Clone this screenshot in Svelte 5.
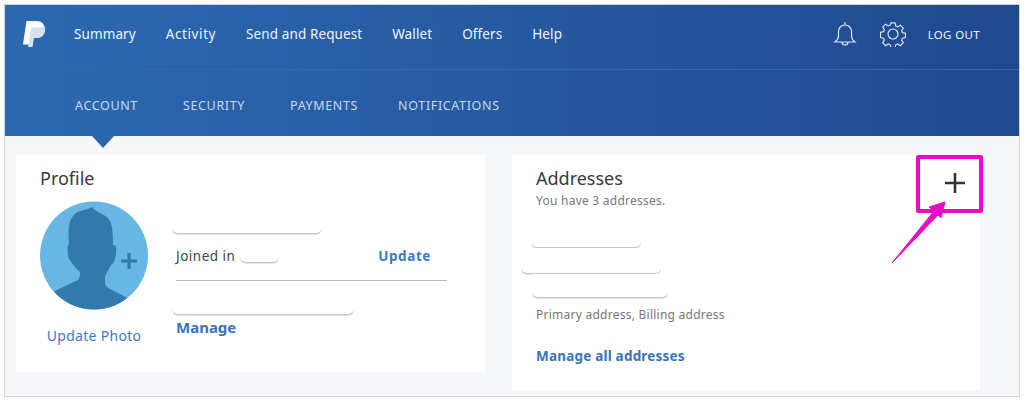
<script lang="ts">
  const mainNav = ['Summary', 'Activity', 'Send and Request', 'Wallet', 'Offers', 'Help'];
  const subNav = ['ACCOUNT', 'SECURITY', 'PAYMENTS', 'NOTIFICATIONS'];
</script>

<div class="page">
  <div class="frame">
    <header class="header">
      <div class="top">
        <svg class="logo" width="23" height="26" viewBox="0 0 23 26">
          <path d="M3.500 0H13C19 0 22 3.500 21 8 20 12 17 14 13 14H8.500L7 23.500H0Z" fill="#fff" />
          <path d="M8 6.500H15C18 6.500 20.500 6 21.300 4.500 23.500 9 21.500 17 14 17H11L9.500 26H5Z" fill="#d5e2f1" />
        </svg>
        <nav class="main-nav">
          {#each mainNav as item}
            <span>{item}</span>
          {/each}
        </nav>
        <div class="tools">
          <svg width="24" height="26" viewBox="0 0 24 26" fill="none" stroke="#dbe4f1" stroke-width="1.200">
            <path d="M12 1v3M12 4c-4 0-6.500 3-6.500 7v4c0 2.500-1.500 4.500-3.500 6h20c-2-1.500-3.500-3.500-3.500-6v-4c0-4-2.500-7-6.500-7Z" />
            <path d="M9 21c0 4 6 4 6 0" />
          </svg>
          <svg class="gear" width="26" height="26" viewBox="0 0 26 26" fill="none" stroke="#dbe4f1" stroke-width="1.200">
            <circle cx="13" cy="13" r="5" />
            <path d="M10.800 1.500h4.400l.7 3.200 2 .9 2.800-1.800 3 3.100-1.700 2.700.8 2 3.200.7v4.400l-3.200.7-.8 2 1.700 2.700-3 3.100-2.800-1.800-2 .9-.7 3.200h-4.400l-.7-3.200-2-.9-2.800 1.800-3-3.100 1.700-2.700-.8-2-3.200-.7V11.300l3.200-.7.800-2-1.700-2.700 3-3.100 2.800 1.800 2-.9Z" transform="translate(.5 .5) scale(.96)" />
          </svg>
          <span class="logout">LOG OUT</span>
        </div>
      </div>
      <nav class="sub-nav">
        {#each subNav as item, i}
          <span class:active={i === 0}>{item}</span>
        {/each}
      </nav>
    </header>

    <main class="content">
      <section class="card profile">
        <h2>Profile</h2>
        <div class="profile-body">
          <div class="photo">
            <svg width="108" height="109" viewBox="0 0 108 109">
              <defs>
                <clipPath id="round"><circle cx="54" cy="54.500" r="54" /></clipPath>
              </defs>
              <circle cx="54" cy="54.500" r="54" fill="#67b6e4" />
              <g clip-path="url(#round)" fill="#3279ae">
                <path d="M52 6C54 10 62 12 68 17 72 22 73 28 73 44L76 45C77 52 75 62 71 64 68 70 66 73 65 75V81C65 85 68 87 72 89L93 100 100 120H0L15 90 38 79C40 77 40 74 40 71 36 68 33 64 30 59 28 58 27 50 28 44L29 43C28 30 28 18 36 12 41 9 48 9 52 6Z" />
              </g>
              <path d="M81 60h16M89 52v16" stroke="#3279ae" stroke-width="3" fill="none" />
            </svg>
            <a href="#photo">Update Photo</a>
          </div>
          <div class="details">
            <div class="blob name"></div>
            <div class="joined">
              <span>Joined in</span>
              <div class="blob year"></div>
              <a href="#update" class="update">Update</a>
            </div>
            <div class="blob email"></div>
            <a href="#manage" class="manage">Manage</a>
          </div>
        </div>
      </section>

      <section class="card addresses">
        <h2>Addresses</h2>
        <p class="count">You have 3 addresses.</p>
        <div class="blob addr1"></div>
        <div class="blob addr2"></div>
        <div class="blob addr3"></div>
        <p class="kind">Primary address, Billing address</p>
        <a href="#all" class="all">Manage all addresses</a>
        <svg class="plus" width="20" height="20" viewBox="0 0 20 20">
          <path d="M0 10h20M10 0v20" stroke="#333" stroke-width="2.600" />
        </svg>
      </section>
    </main>
  </div>

  <div class="highlight"></div>
  <svg class="arrow" width="60" height="68" viewBox="0 0 60 68">
    <path d="M53 2L37 7 42 11 0 63 46 15 49 18Z" fill="#e80cc8" stroke="#e80cc8" stroke-width="1" stroke-linejoin="round" />
  </svg>
</div>

<style>
  :global(body) {
    margin: 0;
    background: #fff;
  }
  .page {
    position: relative;
    width: 1024px;
    height: 401px;
    padding: 4px;
    box-sizing: border-box;
    font-family: "Noto Sans", sans-serif;
    overflow: hidden;
  }
  .frame {
    width: 1016px;
    height: 393px;
    box-sizing: border-box;
    background: #f5f7fb;
    border: 1px solid #d4d4d4;
    overflow: hidden;
  }
  .header {
    height: 131px;
    background: linear-gradient(90deg, #2c69b1, #20498f);
    color: #fff;
  }
  .top {
    display: flex;
    align-items: center;
    height: 58px;
    padding: 0 39px 6px 18px;
    border-bottom: 1px solid #3069b2;
  }
  .main-nav {
    display: flex;
    gap: 30px;
    margin-left: 28px;
    font-size: 13.500px;
    letter-spacing: 0.1px;
    color: #eef3fa;
  }
  .main-nav span:nth-child(2) {
    letter-spacing: 0.6px;
  }
  .tools {
    display: flex;
    align-items: center;
    margin-left: auto;
  }
  .gear {
    margin-left: 23px;
  }
  .logout {
    margin-left: 22px;
    font-size: 11.500px;
    letter-spacing: 0.35px;
    color: #eef3fa;
  }
  .sub-nav {
    display: flex;
    gap: 45px;
    box-sizing: border-box;
    height: 66px;
    align-items: center;
    padding: 4px 0 0 70px;
    font-size: 12.500px;
    letter-spacing: 0.65px;
    color: #c9d8ec;
  }
  .sub-nav span:nth-child(4) {
    margin-left: -5px;
  }
  .sub-nav .active {
    position: relative;
  }
  .sub-nav .active::after {
    content: "";
    position: absolute;
    left: 17px;
    top: 39px;
    border: 11px solid transparent;
    border-top: 12px solid #2b66ad;
    border-bottom: 0;
  }
  .content {
    position: relative;
    display: grid;
    grid-template-columns: 469px 468px;
    gap: 27px;
    padding: 19px 11px 0;
    align-items: start;
  }
  .card {
    position: relative;
    background: #fff;
    box-sizing: border-box;
    padding-left: 24px;
  }
  h2 {
    margin: 0;
    font-size: 18px;
    font-weight: 400;
    line-height: 24px;
    color: #3a3a3a;
  }
  .profile {
    height: 217px;
    padding-top: 11px;
  }
  .profile-body {
    display: flex;
    gap: 28px;
    margin-top: 11px;
  }
  .photo {
    display: flex;
    flex-direction: column;
    align-items: center;
    width: 108px;
  }
  .photo svg {
    display: block;
  }
  .photo a {
    margin-top: 16px;
    font-size: 14px;
    letter-spacing: 0.3px;
    line-height: 20px;
    white-space: nowrap;
    color: #3c7ac0;
    text-decoration: none;
  }
  .details {
    width: 271px;
    padding-top: 2px;
  }
  .blob {
    height: 30px;
    background: #fff;
    border-bottom: 1px solid #c4c6cc;
    border-radius: 0 0 6px 6px;
    box-shadow: 0 1px 0 #e4e5e8;
  }
  .name {
    width: 150px;
    margin-left: -4px;
  }
  .joined {
    display: flex;
    align-items: center;
    height: 46px;
    border-bottom: 1px solid #b4bac3;
    font-size: 13.500px;
    letter-spacing: 0.5px;
    color: #444;
  }
  .joined > span {
    margin-top: -2px;
  }
  .year {
    width: 39px;
    height: 8px;
    margin: 2px 0 0 5px;
  }
  .update {
    margin: -2px 16px 0 auto;
    font-weight: 700;
    font-size: 13.500px;
    letter-spacing: 0.6px;
    color: #3c7ac0;
    text-decoration: none;
  }
  .email {
    width: 182px;
    margin: 3px 0 0 -4px;
  }
  .manage {
    display: block;
    font-size: 15px;
    line-height: 24px;
    font-weight: 700;
    color: #3974ba;
    text-decoration: none;
  }
  .addresses {
    height: 235px;
    padding-top: 11px;
  }
  .count {
    margin: 2px 0 0;
    font-size: 12px;
    line-height: 18px;
    letter-spacing: 0.25px;
    color: #777;
  }
  .addr1 {
    width: 110px;
    margin: 7px 0 0 -5px;
  }
  .addr2 {
    width: 140px;
    height: 25px;
    margin-left: -15px;
  }
  .addr3 {
    width: 136px;
    height: 23px;
    margin-left: -4px;
  }
  .kind {
    margin: 8px 0 0;
    font-size: 12px;
    line-height: 18px;
    letter-spacing: 0.25px;
    color: #777;
  }
  .all {
    display: block;
    margin-top: 22px;
    font-size: 13.500px;
    line-height: 20px;
    font-weight: 700;
    letter-spacing: 0.2px;
    color: #3974ba;
    text-decoration: none;
  }
  .plus {
    position: absolute;
    left: 433px;
    top: 18px;
  }
  .highlight {
    position: absolute;
    left: 916px;
    top: 155px;
    width: 67px;
    height: 58px;
    box-sizing: border-box;
    border: 4px solid #e80cc8;
    border-radius: 2px;
  }
  .arrow {
    position: absolute;
    left: 892px;
    top: 200px;
  }
</style>
